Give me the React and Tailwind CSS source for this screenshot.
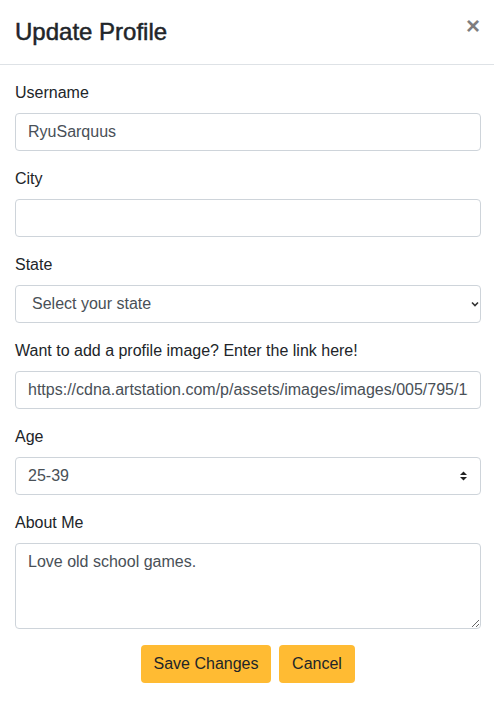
import { useState } from "react";

const inputCls =
  "block w-full h-[38px] px-3 border border-[#ced4da] rounded-[4px] bg-white text-[16px] leading-6 text-[#495057] outline-none";

function Field({ label, children }) {
  return (
    <div className="mb-4">
      <label className="block mb-2 text-[16px] leading-6 text-[#212529]">{label}</label>
      {children}
    </div>
  );
}

export default function App() {
  const [username, setUsername] = useState("RyuSarquus");
  const [city, setCity] = useState("");
  const [image, setImage] = useState(
    "https://cdna.artstation.com/p/assets/images/images/005/795/123/large/ryu-sarquus.jpg"
  );
  const [about, setAbout] = useState("Love old school games.");

  return (
    <div className="w-[494px] min-h-[709px] bg-white font-['Liberation_Sans',Arial,sans-serif] text-[#212529]">
      <div className="flex items-start justify-between h-[65px] pl-[15px] pr-[14px] pt-4 border-b border-[#dee2e6]">
        <h5 className="text-[24px] leading-[31px] font-normal text-[#212529] [-webkit-text-stroke:0.5px_#212529]">
          Update Profile
        </h5>
        <button className="mt-[-6px] text-[24px] leading-[31px] font-bold text-black opacity-50">
          ×
        </button>
      </div>

      <div className="pl-[15px] pr-[13px] pt-4">
        <Field label="Username">
          <input className={inputCls} value={username} onChange={(e) => setUsername(e.target.value)} />
        </Field>
        <Field label="City">
          <input className={inputCls} value={city} onChange={(e) => setCity(e.target.value)} />
        </Field>
        <Field label="State">
          <div className="relative">
            <select className={inputCls + " appearance-none pl-4 text-[#212529]"} defaultValue="">
              <option value="">Select your state</option>
              <option>California</option>
              <option>Texas</option>
            </select>
            <svg
              className="absolute right-[1px] top-[15px] pointer-events-none"
              width="10"
              height="8"
              viewBox="0 0 10 8"
            >
              <path d="M2 2.5 L5 5.5 L8 2.5" fill="none" stroke="#333" strokeWidth="1.6" />
            </svg>
          </div>
        </Field>
        <Field label="Want to add a profile image? Enter the link here!">
          <input className={inputCls} value={image} onChange={(e) => setImage(e.target.value)} />
        </Field>
        <Field label="Age">
          <div className="relative">
            <select className={inputCls + " appearance-none"} defaultValue="25-39">
              <option>18-24</option>
              <option>25-39</option>
              <option>40+</option>
            </select>
            <svg
              className="absolute right-[13px] top-[13px] pointer-events-none"
              width="9"
              height="12"
              viewBox="0 0 9 12"
            >
              <path d="M1 5 L4.5 1.5 L8 5 Z" fill="#222" />
              <path d="M1 7 L4.5 10.5 L8 7 Z" fill="#222" />
            </svg>
          </div>
        </Field>
        <Field label="About Me">
          <textarea
            rows={3}
            className="block w-full h-[86px] px-3 py-[6px] border border-[#ced4da] rounded-[4px] text-[16px] leading-6 text-[#495057] outline-none"
            value={about}
            onChange={(e) => setAbout(e.target.value)}
          />
        </Field>

        <div className="flex justify-center gap-2">
          <button className="w-[130px] h-[38px] rounded-[4px] bg-[#ffbb33] text-[16px] leading-6 text-[#212529]">
            Save Changes
          </button>
          <button className="w-[76px] h-[38px] rounded-[4px] bg-[#ffbb33] text-[16px] leading-6 text-[#212529]">
            Cancel
          </button>
        </div>
      </div>
    </div>
  );
}
